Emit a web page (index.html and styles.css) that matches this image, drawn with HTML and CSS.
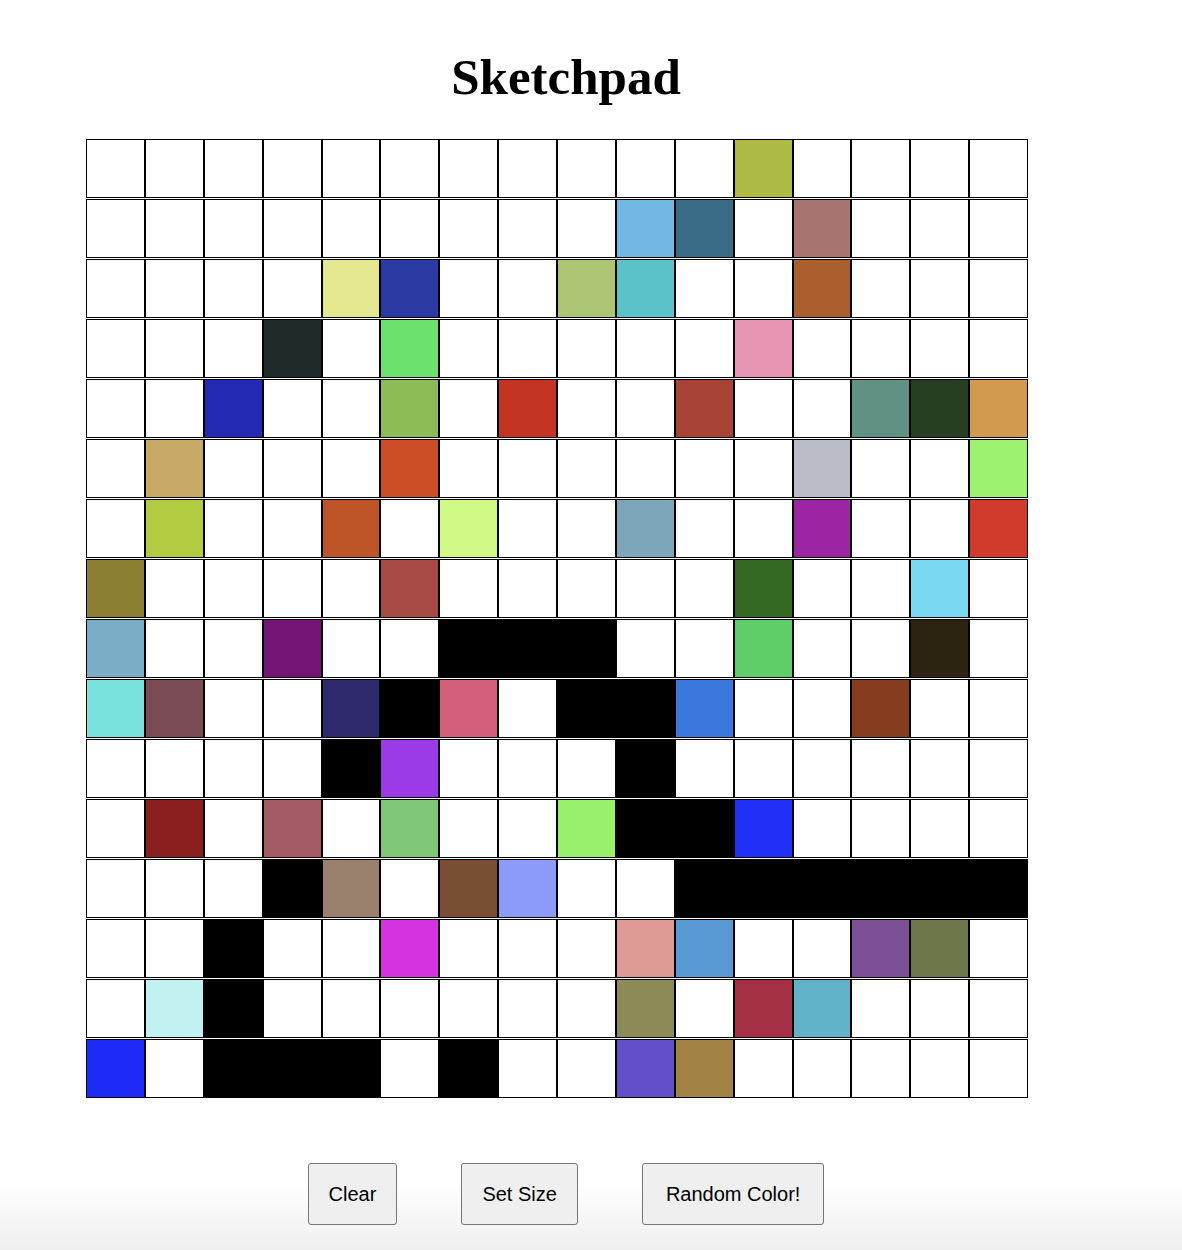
FILE: index.html
```html
<!DOCTYPE html>
<html lang="en">
<head>
  <meta charset="UTF-8">
  <title>Sketchpad</title>
  <link rel="stylesheet" href="styles.css">
</head>
<body>
  <div class="page">
    <h1>Sketchpad</h1>

    <div id="grid" class="grid"></div>

    <div class="controls">
      <button type="button" id="clear">Clear</button>
      <button type="button" id="size">Set Size</button>
      <button type="button" id="random" class="wide">Random Color!</button>
    </div>
  </div>

  <script>
    const SIZE = 16;

    // painted cells: row -> { column: colour }
    const painted = {
      0: { 11: "#adbb45" },
      1: { 9: "#71b8e4", 10: "#386b85", 12: "#a87470" },
      2: { 4: "#e3e790", 5: "#2b3aa3", 8: "#abc574", 9: "#5bc2c9", 12: "#ab5f2e" },
      3: { 3: "#1f2b2b", 5: "#6de16d", 11: "#e795b5" },
      4: { 2: "#2429b3", 5: "#8dbb57", 7: "#c43424", 10: "#a84435", 13: "#609185", 14: "#263f20", 15: "#d19a4e" },
      5: { 1: "#c6a964", 5: "#cc4e26", 12: "#babcc8", 15: "#9df26f" },
      6: { 1: "#b1cb43", 4: "#bd5528", 6: "#d1f986", 9: "#7da6bb", 12: "#9c25a3", 15: "#d13b2b" },
      7: { 0: "#8a7f33", 5: "#a84b47", 11: "#356823", 14: "#78d8f1" },
      8: { 0: "#7aaec6", 3: "#741575", 6: "#000", 7: "#000", 8: "#000", 11: "#5ecd6a", 14: "#2c2410" },
      9: { 0: "#79e2dd", 1: "#7a4b55", 4: "#2e286c", 5: "#000", 6: "#d45f7d", 8: "#000", 9: "#000", 10: "#3b78db", 13: "#863c1e" },
      10: { 4: "#000", 5: "#9b3ae6", 9: "#000" },
      11: { 1: "#891f1f", 3: "#a55b65", 5: "#80c878", 8: "#99f06d", 9: "#000", 10: "#000", 11: "#1f2ff5" },
      12: { 3: "#000", 4: "#9a816e", 6: "#7a4e34", 7: "#8d9bf8", 10: "#000", 11: "#000", 12: "#000", 13: "#000", 14: "#000", 15: "#000" },
      13: { 2: "#000", 5: "#d633e0", 9: "#df9a96", 10: "#5a9ad4", 13: "#7c5095", 14: "#6c764a" },
      14: { 1: "#c2f1f1", 2: "#000", 9: "#8c8a56", 11: "#a52f44", 12: "#62b3c9" },
      15: { 0: "#1e2af5", 2: "#000", 3: "#000", 4: "#000", 6: "#000", 9: "#634fc9", 10: "#a28245" }
    };

    const grid = document.getElementById("grid");

    for (let r = 0; r < SIZE; r++) {
      const row = document.createElement("div");
      row.className = "row";
      for (let c = 0; c < SIZE; c++) {
        const cell = document.createElement("div");
        cell.className = "cell";
        const colour = painted[r] && painted[r][c];
        if (colour) cell.style.backgroundColor = colour;
        row.appendChild(cell);
      }
      grid.appendChild(row);
    }

    document.getElementById("clear").addEventListener("click", function() {
      document.querySelectorAll(".cell").forEach(function(cell) {
        cell.style.backgroundColor = "";
      });
    });
  </script>
</body>
</html>
```

FILE: styles.css
```css
html {
  min-height: 1250px;
  background: linear-gradient(to bottom, #ffffff 0, #ffffff 1182px, #efefef 1250px);
}

body {
  margin: 0;
  font-family: "Liberation Sans", Arial, sans-serif;
}

.page {
  width: 960px;
  margin-left: 86px;
  padding-top: 52px;
}

h1 {
  margin: 0;
  text-align: center;
  font-family: "Liberation Serif", "Times New Roman", serif;
  font-size: 51px;
  line-height: 51px;
  font-weight: bold;
  color: black;
}

.grid {
  width: 942px;
  margin-top: 36px;
  display: flex;
  flex-direction: column;
  gap: 1px;
}

.row {
  display: flex;
  height: 59px;
}

.cell {
  flex: 1;
  box-sizing: border-box;
  border: 1px solid black;
  background-color: white;
}

.controls {
  display: flex;
  justify-content: center;
  gap: 64px;
  margin-top: 65px;
}

button {
  font-family: "Liberation Sans", Arial, sans-serif;
  font-size: 20px;
  line-height: 22px;
  padding: 19px 20px;
  color: black;
  background-color: #efefef;
  border: 1px solid #767676;
  border-radius: 3px;
  cursor: pointer;
}

button.wide {
  padding-left: 23px;
  padding-right: 23px;
}
```
